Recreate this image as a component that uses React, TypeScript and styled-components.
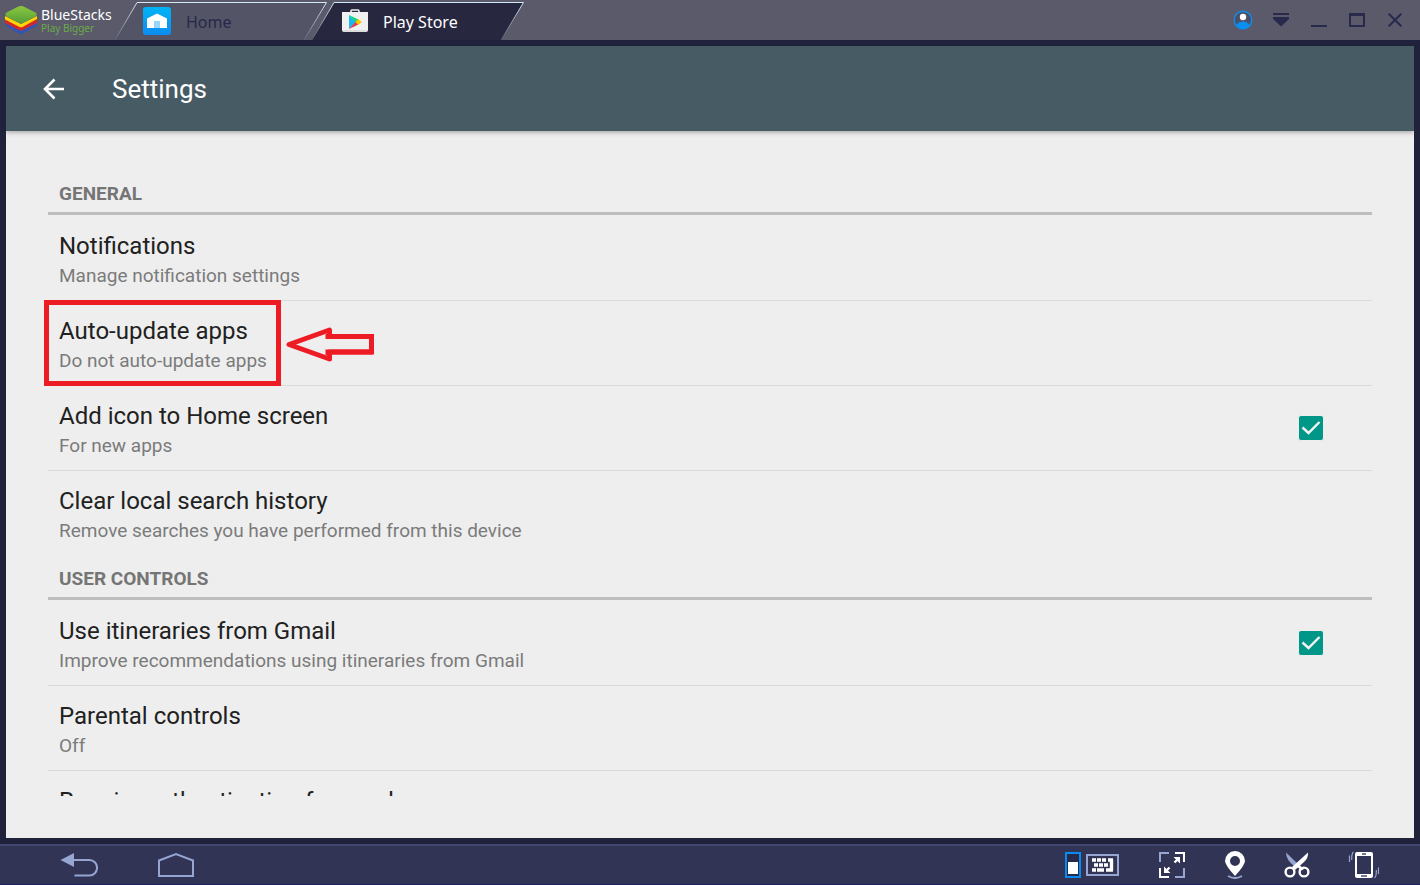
import React from 'react';
import styled, { createGlobalStyle, css } from 'styled-components';

const GlobalStyle = createGlobalStyle`
  *, *::before, *::after { box-sizing: border-box; }
  body { margin: 0; background: #20213a; }
  button { border: 0; padding: 0; margin: 0; background: none; font: inherit; color: inherit; cursor: pointer; }
  svg { display: block; flex: none; }
  h1, h2, p { margin: 0; font-weight: 400; }
`;

const Shell = styled.div`
  display: flex;
  flex-direction: column;
  height: 100vh;
  background: #20213a;
  font-family: Roboto, 'Liberation Sans', sans-serif;
`;

/* Window title bar */

const TitleBar = styled.header`
  display: flex;
  flex: none;
  height: 40px;
  background: #5a5a6b;
  font-family: 'Noto Sans', 'Open Sans', sans-serif;
`;

const Brand = styled.div`
  display: flex;
  align-items: center;
  gap: 3px;
  width: 115px;
  padding-left: 4px;
`;

const BrandText = styled.div`
  display: flex;
  flex-direction: column;
  white-space: nowrap;
`;

const BrandName = styled.span`
  color: #ffffff;
  font-size: 14px;
  line-height: 16px;
`;

const BrandTagline = styled.span`
  color: #6cab45;
  font-size: 10px;
  line-height: 10px;
`;

const Tabs = styled.nav`
  display: flex;
  flex: 1;
`;

const Tab = styled.button<{ $active?: boolean }>`
  position: relative;
  display: flex;
  align-items: center;
  gap: 15px;
  width: 212px;
  padding: 2px 0 0 28px;
  color: ${p => (p.$active ? '#ffffff' : '#26284a')};
  font-size: 16px;

  & + & { margin-left: -15px; }
`;

const TabShape = styled.svg`
  position: absolute;
  left: 0;
  bottom: 0;
`;

const TabIcon = styled.svg`
  position: relative;
`;

const TabLabel = styled.span`
  position: relative;
  padding-top: 2px;
`;

const WindowControls = styled.div`
  display: flex;
  padding-right: 6px;
`;

const WindowButton = styled.button`
  display: flex;
  align-items: center;
  justify-content: center;
  width: 38px;
`;

/* Android screen */

const Screen = styled.main`
  display: flex;
  flex: 1;
  flex-direction: column;
  min-height: 0;
  margin: 6px;
  padding-bottom: 42px;
  background: #eeeeee;
`;

const AppBar = styled.div`
  position: relative;
  display: flex;
  flex: none;
  align-items: center;
  gap: 44px;
  height: 85px;
  padding-left: 34px;
  background: #475b65;
  box-shadow: 0 1px 5px rgba(0, 0, 0, 0.35);
  clip-path: inset(0 0 -8px 0);
`;

const BackButton = styled.button`
  display: flex;
`;

const ScreenTitle = styled.h1`
  color: #ffffff;
  font-size: 26px;
  line-height: 32px;
`;

const SettingsList = styled.div`
  flex: 1;
  min-height: 0;
  padding: 40px 42px 0;
  overflow-y: auto;
  scrollbar-width: none;
`;

const SectionTitle = styled.h2`
  height: 44px;
  margin-bottom: 1px;
  padding: 11px 11px 0;
  border-bottom: 3px solid #bdbdbd;
  color: #757575;
  font-size: 19px;
  font-weight: 700;
  line-height: 24px;
`;

const rowLayout = css`
  position: relative;
  display: flex;
  align-items: center;
  justify-content: space-between;
  width: 100%;
  height: 85px;
  padding: 0 48px 0 11px;
  border-bottom: 1px solid #dadada;
  text-align: left;
  cursor: pointer;
`;

const ActionRow = styled.button<{ $last?: boolean }>`
  && {
    ${rowLayout}
    border-bottom-color: ${p => (p.$last ? 'transparent' : '#dadada')};
  }
`;

const CheckRow = styled.label`
  ${rowLayout}
`;

const RowText = styled.span`
  display: flex;
  flex-direction: column;
  padding-top: 6px;
`;

const RowTitle = styled.span`
  color: #212121;
  font-size: 24px;
  line-height: 30px;
`;

const RowSummary = styled.span`
  color: #7b7b7b;
  font-size: 19px;
  line-height: 30px;
`;

const CheckMark = styled.span`
  display: grid;

  & > * { grid-area: 1 / 1; }
`;

const CheckInput = styled.input`
  appearance: none;
  width: 26px;
  height: 26px;
  margin: 0;
  border: 1px solid #eeeeee;
  border-radius: 3px;
  background: #757575;

  &:checked { background: #009688; }
  & + svg { visibility: hidden; pointer-events: none; }
  &:checked + svg { visibility: visible; }
`;

const Highlight = styled.span`
  position: absolute;
  top: -1px;
  left: -4px;
  z-index: 1;
  width: 237px;
  height: 86px;
  border: 5px solid #ed1c24;
`;

const HighlightArrow = styled.svg`
  position: absolute;
  top: 24px;
  left: 238px;
`;

/* Bottom bar */

const BottomBar = styled.footer`
  display: flex;
  flex: none;
  align-items: center;
  justify-content: space-between;
  height: 41px;
  padding: 0 41px 0 60px;
  border-top: 2px solid #42466c;
  border-bottom: 1px solid #1d2163;
  background: #313454;
`;

const NavGroup = styled.div<{ $gap: number }>`
  display: flex;
  align-items: center;
  gap: ${p => p.$gap}px;
`;

const IconButton = styled.button`
  display: flex;
`;

const Logo = () => (
  <svg width="34" height="30" viewBox="0 0 34 30" aria-hidden="true">
    <path d="M1 18 L17 26 L33 17 V20.500 L19 28.500 Q17 29.500 15 28.500 L2 21 Z" fill="#2f55b5" />
    <path d="M1 14.500 L17 22 L33 14 V18 L19 25 Q17 26 15 25 L1 18 Z" fill="#d7262b" />
    <path d="M1 11 L17 19 L33 11 V14 L19 21.800 Q17 22.800 15 21.800 L1 14.500 Z" fill="#ffd400" />
    <path d="M14.500 1.600 Q17 0.500 19.500 1.600 L31.500 7.500 Q34 9.500 31.500 11.200 L19.500 17.600 Q17 18.800 14.500 17.600 L2.500 11.200 Q0 9.500 2.500 7.500 Z" fill="url(#logoGreen)" />
    <defs>
      <linearGradient id="logoGreen" x1="0" y1="0" x2="0" y2="1">
        <stop offset="0" stopColor="#8cc63f" />
        <stop offset="1" stopColor="#55a038" />
      </linearGradient>
    </defs>
  </svg>
);

const TabBackdrop = ({ id, fill }: { id: string; fill: string }) => (
  <TabShape width="212" height="38" viewBox="0 0 212 38" aria-hidden="true">
    <defs>
      <linearGradient id={id} x1="0" y1="0" x2="0" y2="38" gradientUnits="userSpaceOnUse">
        <stop offset="0" stopColor="#d5e9f7" />
        <stop offset="1" stopColor="#d5e9f7" stopOpacity="0.100" />
      </linearGradient>
    </defs>
    <path d="M0 38 L22 0.500 H211.500 L189 38 Z" fill={fill} />
    <path d="M0 38 L22 0.500 H211.500 L189 38" fill="none" stroke={`url(#${id})`} />
  </TabShape>
);

const HomeTabIcon = () => (
  <TabIcon width="28" height="28" viewBox="0 0 28 28" aria-hidden="true">
    <defs>
      <linearGradient id="homeBlue" x1="0" y1="0" x2="0" y2="1">
        <stop offset="0" stopColor="#00b4f5" />
        <stop offset="1" stopColor="#0d8cf0" />
      </linearGradient>
    </defs>
    <rect width="28" height="28" rx="3" fill="url(#homeBlue)" />
    <path d="M4 11.500 L14 6.500 L24 11.500 V21 H4 Z" fill="#ffffff" />
    <rect x="11" y="14" width="6" height="7" fill="#9bd5fa" />
  </TabIcon>
);

const PlayTabIcon = () => (
  <TabIcon width="28" height="28" viewBox="0 0 28 28" aria-hidden="true">
    <path d="M11 5.500 V4 Q11 3 12 3 H18 Q19 3 19 4 V5.500" fill="none" stroke="#ededed" strokeWidth="1.600" />
    <path d="M2 5 H28 V23 Q28 25 26 25 H4 Q2 25 2 23 Z" fill="#f1f1f1" />
    <path d="M3 24 H27" stroke="#c9c9c9" />
    <path d="M9 8 V22 L16.500 15 Z" fill="#18b9ee" />
    <path d="M9 8 L18.500 12.500 L16 15.500 Z" fill="#16d87a" />
    <path d="M9 22 L18.500 17.500 L16 14.500 Z" fill="#f13650" />
    <path d="M18 12 L22 15 L18 18 L15.500 15 Z" fill="#ffc400" />
  </TabIcon>
);

const Tick = () => (
  <svg width="26" height="26" viewBox="0 0 26 26" fill="none" stroke="#f4f4f4" strokeWidth="2.400" aria-hidden="true">
    <path d="M4.500 12.500 L10.500 18 L21.500 7" />
  </svg>
);

interface Setting {
  title: string;
  summary?: string;
  checkbox?: boolean;
  highlighted?: boolean;
}

const sections: { title: string; settings: Setting[] }[] = [
  {
    title: 'GENERAL',
    settings: [
      { title: 'Notifications', summary: 'Manage notification settings' },
      { title: 'Auto-update apps', summary: 'Do not auto-update apps', highlighted: true },
      { title: 'Add icon to Home screen', summary: 'For new apps', checkbox: true },
      { title: 'Clear local search history', summary: 'Remove searches you have performed from this device' },
    ],
  },
  {
    title: 'USER CONTROLS',
    settings: [
      { title: 'Use itineraries from Gmail', summary: 'Improve recommendations using itineraries from Gmail', checkbox: true },
      { title: 'Parental controls', summary: 'Off' },
      { title: 'Require authentication for purchases', summary: 'For all purchases' },
    ],
  },
];

const SettingRow = ({ setting, last }: { setting: Setting; last: boolean }) => {
  const text = (
    <RowText>
      <RowTitle>{setting.title}</RowTitle>
      <RowSummary>{setting.summary}</RowSummary>
    </RowText>
  );

  if (setting.checkbox) {
    return (
      <CheckRow>
        {text}
        <CheckMark>
          <CheckInput type="checkbox" defaultChecked />
          <Tick />
        </CheckMark>
      </CheckRow>
    );
  }

  return (
    <ActionRow $last={last}>
      {text}
      {setting.highlighted && (
        <>
          <Highlight />
          <HighlightArrow width="90" height="40" viewBox="0 0 90 40" fill="none" stroke="#ed1c24" strokeWidth="5" aria-hidden="true">
            <path d="M3 19.500 L43.500 5 V11.500 H85.500 V27 H43.500 V34 Z" strokeLinejoin="round" />
            <path d="M42 9 V11.500 H85.500 V27 H42 V30" />
          </HighlightArrow>
        </>
      )}
    </ActionRow>
  );
};

export default function App() {
  return (
    <>
      <GlobalStyle />
      <Shell>
        <TitleBar>
          <Brand>
            <Logo />
            <BrandText>
              <BrandName>BlueStacks</BrandName>
              <BrandTagline>Play Bigger</BrandTagline>
            </BrandText>
          </Brand>
          <Tabs>
            <Tab>
              <TabBackdrop id="homeEdge" fill="#545467" />
              <HomeTabIcon />
              <TabLabel>Home</TabLabel>
            </Tab>
            <Tab $active>
              <TabBackdrop id="playEdge" fill="#272840" />
              <PlayTabIcon />
              <TabLabel>Play Store</TabLabel>
            </Tab>
          </Tabs>
          <WindowControls>
            <WindowButton aria-label="Account">
              <svg width="20" height="20" viewBox="0 0 20 20">
                <circle cx="10" cy="10" r="8.800" fill="#4b5068" stroke="#0a8ff0" strokeWidth="1.400" />
                <path d="M3.500 15.500 Q5 11.500 10 11.500 Q15 11.500 16.500 15.500 Q14 19 10 19 Q6 19 3.500 15.500 Z" fill="#0a8ff0" />
                <circle cx="10" cy="7" r="3.200" fill="#ffffff" />
              </svg>
            </WindowButton>
            <WindowButton aria-label="Menu">
              <svg width="16" height="14" viewBox="0 0 16 14" fill="#282a4c">
                <path d="M0 0 H16 V2 H0 Z M0 4 H16 V6 L8 13.500 L0 6 Z" />
              </svg>
            </WindowButton>
            <WindowButton aria-label="Minimize">
              <svg width="16" height="14" viewBox="0 0 16 14" fill="#282a4c">
                <path d="M0 12 H16 V14 H0 Z" />
              </svg>
            </WindowButton>
            <WindowButton aria-label="Maximize">
              <svg width="16" height="14" viewBox="0 0 16 14" fill="#282a4c">
                <path fillRule="evenodd" d="M0 0 H16 V14 H0 Z M2 3 V12 H14 V3 Z" />
              </svg>
            </WindowButton>
            <WindowButton aria-label="Close">
              <svg width="14" height="14" viewBox="0 0 14 14" stroke="#282a4c" strokeWidth="2">
                <path d="M0.700 0.700 L13.300 13.300 M13.300 0.700 L0.700 13.300" />
              </svg>
            </WindowButton>
          </WindowControls>
        </TitleBar>

        <Screen>
          <AppBar>
            <BackButton aria-label="Navigate up">
              <svg width="28" height="28" viewBox="0 0 28 28" fill="none" stroke="#ffffff" strokeWidth="2.600">
                <path d="M14.500 4.500 L5 14 L14.500 23.500 M5 14 H24" />
              </svg>
            </BackButton>
            <ScreenTitle>Settings</ScreenTitle>
          </AppBar>
          <SettingsList>
            {sections.map(section => (
              <section key={section.title}>
                <SectionTitle>{section.title}</SectionTitle>
                {section.settings.map((setting, i) => (
                  <SettingRow key={setting.title} setting={setting} last={i === section.settings.length - 1} />
                ))}
              </section>
            ))}
          </SettingsList>
        </Screen>

        <BottomBar>
          <NavGroup $gap={60}>
            <IconButton aria-label="Back">
              <svg width="38" height="26" viewBox="0 0 38 26">
                <path d="M0.500 8 L14 1 V15 Z" fill="#96a5d2" />
                <path d="M13 8 H29.500 A7.500 7.700 0 0 1 29.500 23.500 H14.500" fill="none" stroke="#96a5d2" strokeWidth="2" />
              </svg>
            </IconButton>
            <IconButton aria-label="Home">
              <svg width="36" height="26" viewBox="0 0 36 26" fill="none" stroke="#96a5d2" strokeWidth="2">
                <path d="M1 8.500 L18 2 L35 8.500 V24 H1 Z" />
              </svg>
            </IconButton>
          </NavGroup>
          <NavGroup $gap={27}>
            <IconButton aria-label="Keyboard controls">
              <svg width="62" height="28" viewBox="0 0 62 28">
                <rect x="1" y="2" width="14" height="24" fill="#272a49" stroke="#078bf0" strokeWidth="2" />
                <rect x="3" y="11" width="10" height="12" fill="#ffffff" />
                <rect x="22" y="4" width="31" height="20" fill="none" stroke="#96a5d2" strokeWidth="2" />
                <path d="M27 9h4M32 9h4M37 9h4M43 9h5M29 14h4M34 14h4M39 14h4M27 19h4M32 19h7M41 19h7M46.500 9v10" stroke="#ffffff" strokeWidth="3.400" />
              </svg>
            </IconButton>
            <IconButton aria-label="Full screen">
              <svg width="36" height="28" viewBox="0 0 36 28" fill="none" strokeWidth="2">
                <path d="M6 11 V2 H15 M30 17 V26 H21" stroke="#96a5d2" />
                <path d="M21 2 H30 V11 M6 17 V26 H15" stroke="#ffffff" />
                <path d="M20.500 11.500 L25 7 M15.500 16.500 L11 21" stroke="#ffffff" strokeWidth="2.400" />
                <path d="M19.500 6 H26 V12.500 Z M10 15.500 V22 H16.500 Z" fill="#ffffff" />
              </svg>
            </IconButton>
            <IconButton aria-label="Location">
              <svg width="36" height="28" viewBox="0 0 36 28">
                <path fillRule="evenodd" d="M18 0 A10 10 0 0 1 28 10 Q28 14 18 25 Q8 14 8 10 A10 10 0 0 1 18 0 Z M18 5 A5 5 0 1 0 18 15 A5 5 0 1 0 18 5 Z" fill="#ffffff" />
                <path d="M11 25 Q18 29 25 25" fill="none" stroke="#96a5d2" strokeWidth="2" />
              </svg>
            </IconButton>
            <IconButton aria-label="Screenshot">
              <svg width="36" height="28" viewBox="0 0 36 28">
                <path d="M6 1.500 L17.500 12.500 L14.500 15.500 Q6 9 6 1.500 Z" fill="#96a5d2" />
                <path d="M28 1.500 Q28.500 7 24 11 L15 19 L11.500 16.500 Z" fill="#ffffff" />
                <path d="M16 15 L19 13.500 L24 18 L21.500 19.500 Z" fill="#ffffff" />
                <circle cx="10" cy="21" r="4.400" fill="none" stroke="#ffffff" strokeWidth="2.400" />
                <circle cx="24" cy="21" r="4.400" fill="none" stroke="#ffffff" strokeWidth="2.400" />
              </svg>
            </IconButton>
            <IconButton aria-label="Shake">
              <svg width="36" height="28" viewBox="0 0 36 28">
                <path fillRule="evenodd" d="M14 1 H28 Q30 1 30 3 V25 Q30 27 28 27 H14 Q12 27 12 25 V3 Q12 1 14 1 Z M14 5 V23 H28 V5 Z" fill="#ffffff" />
                <path d="M19 3 H23 M18 25 H24" stroke="#4a4d6c" strokeWidth="1.500" />
                <path d="M10.500 1 Q8.500 2.500 8.700 9 M6.500 4.500 V11 M31.500 27 Q33.500 25.500 33.300 19 M35.500 23 V16.500" fill="none" stroke="#96a5d2" strokeWidth="1.200" />
              </svg>
            </IconButton>
          </NavGroup>
        </BottomBar>
      </Shell>
    </>
  );
}
